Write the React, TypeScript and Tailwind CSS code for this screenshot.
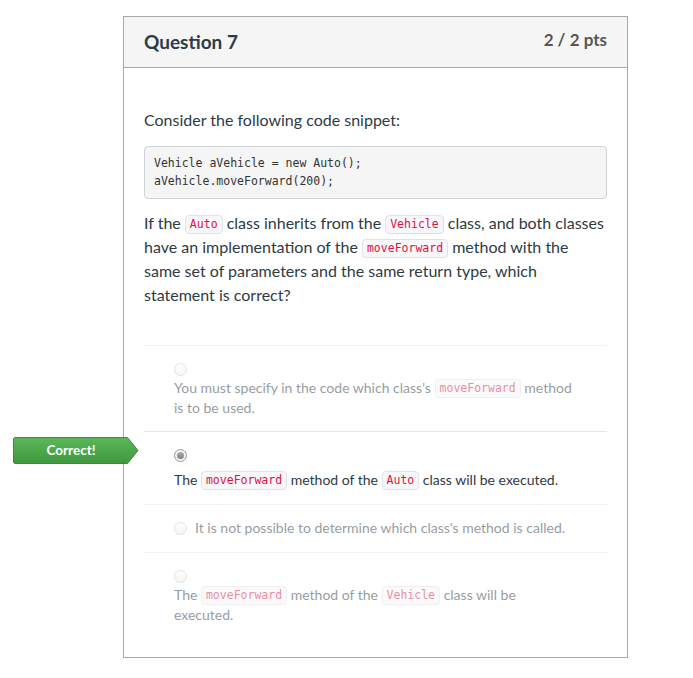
import React from "react";

const mono = { fontFamily: '"DejaVu Sans Mono", "Liberation Mono", monospace' };

function Code({ children }: { children: React.ReactNode }) {
  return (
    <code
      style={mono}
      className="inline-block rounded-[4px] border border-[#e1e1e8] bg-[#f7f7f9] px-[4px] text-[11.5px] leading-[17px] text-[#dd1144] align-[1px]"
    >
      {children}
    </code>
  );
}

function Radio({ checked = false }: { checked?: boolean }) {
  if (checked) {
    return (
      <span className="flex h-[13px] w-[13px] items-center justify-center rounded-full border border-[#9a9a9a] bg-[#f3f3f3]">
        <span className="h-[7px] w-[7px] rounded-full bg-gradient-to-b from-[#b0b0b0] to-[#7d7d7d]" />
      </span>
    );
  }
  return (
    <span className="block h-[13px] w-[13px] shrink-0 rounded-full border border-[#c9c9c9] bg-gradient-to-b from-white to-[#ececec]" />
  );
}

function CorrectBadge() {
  return (
    <div className="absolute left-[-131px] top-[5px] h-[27px] w-[126px]">
      <svg width="126" height="27" viewBox="0 0 126 27" className="absolute inset-0">
        <defs>
          <linearGradient id="g" x1="0" y1="0" x2="0" y2="1">
            <stop offset="0" stopColor="#5bb85a" />
            <stop offset="1" stopColor="#3f983e" />
          </linearGradient>
        </defs>
        <polygon
          points="0.5,1.5 1.5,0.5 114.5,0.5 125,13.5 114.5,26.5 1.5,26.5 0.5,25.5"
          fill="url(#g)"
          stroke="#3c8a3a"
        />
      </svg>
      <div className="relative flex h-full w-[116px] items-center justify-center pb-[1px] text-[13.5px] font-bold text-white">
        Correct!
      </div>
    </div>
  );
}

export default function App() {
  return (
    <main
      className="min-h-screen bg-white pt-[16px] text-[#2d3b45]"
      style={{ fontFamily: 'Lato, "Open Sans", sans-serif' }}
    >
      <div className="ml-[123px] w-[505px] border border-[#a8a8a8]">
        {/* HEADER */}
        <div className="flex h-[51px] items-center justify-between border-b border-[#a8a8a8] bg-[#f5f5f5] px-[20px]">
          <h2 className="text-[19px] font-bold">Question 7</h2>
          <span className="mb-[5px] text-[17px] font-bold text-[#555]">2 / 2 pts</span>
        </div>

        {/* BODY */}
        <div className="px-[20px] pb-[32px] pt-[40px]">
          <p className="text-[16px] leading-[24px]">Consider the following code snippet:</p>

          <pre
            style={mono}
            className="mt-[14px] rounded-[4px] border border-[#cfd4d8] bg-[#f5f5f5] px-[9px] pb-[8px] pt-[7px] text-[11.5px] leading-[18px] text-[#333]"
          >
            {"Vehicle aVehicle = new Auto();\naVehicle.moveForward(200);"}
          </pre>

          <p className="mt-[12px] text-[16px] leading-[24px]">
            If the <Code>Auto</Code> class inherits from the <Code>Vehicle</Code> class, and both classes
            have an implementation of the <Code>moveForward</Code> method with the same set of parameters
            and the same return type, which statement is correct?
          </p>

          {/* ANSWERS */}
          <div className="mt-[38px] text-[14px] leading-[20px]">
            <div className="border-t border-[#e6e6e6] pb-[13px] pl-[30px] pt-[17px] opacity-50">
              <Radio />
              <p className="mt-[2px] w-[401px]">
                You must specify in the code which class's <Code>moveForward</Code> method is to be used.
              </p>
            </div>

            <div className="relative border-t border-[#e6e6e6] pb-[14px] pl-[30px] pt-[17px]">
              <CorrectBadge />
              <Radio checked />
              <p className="mt-[8px] w-[401px]">
                The <Code>moveForward</Code> method of the <Code>Auto</Code> class will be executed.
              </p>
            </div>

            <div className="flex items-center gap-[8px] border-t border-[#e6e6e6] pb-[14px] pl-[30px] pt-[13px] opacity-50">
              <Radio />
              <p>It is not possible to determine which class's method is called.</p>
            </div>

            <div className="border-t border-[#e6e6e6] pl-[30px] pt-[17px] opacity-50">
              <Radio />
              <p className="mt-[2px] w-[401px]">
                The <Code>moveForward</Code> method of the <Code>Vehicle</Code> class will be executed.
              </p>
            </div>
          </div>
        </div>
      </div>
    </main>
  );
}
